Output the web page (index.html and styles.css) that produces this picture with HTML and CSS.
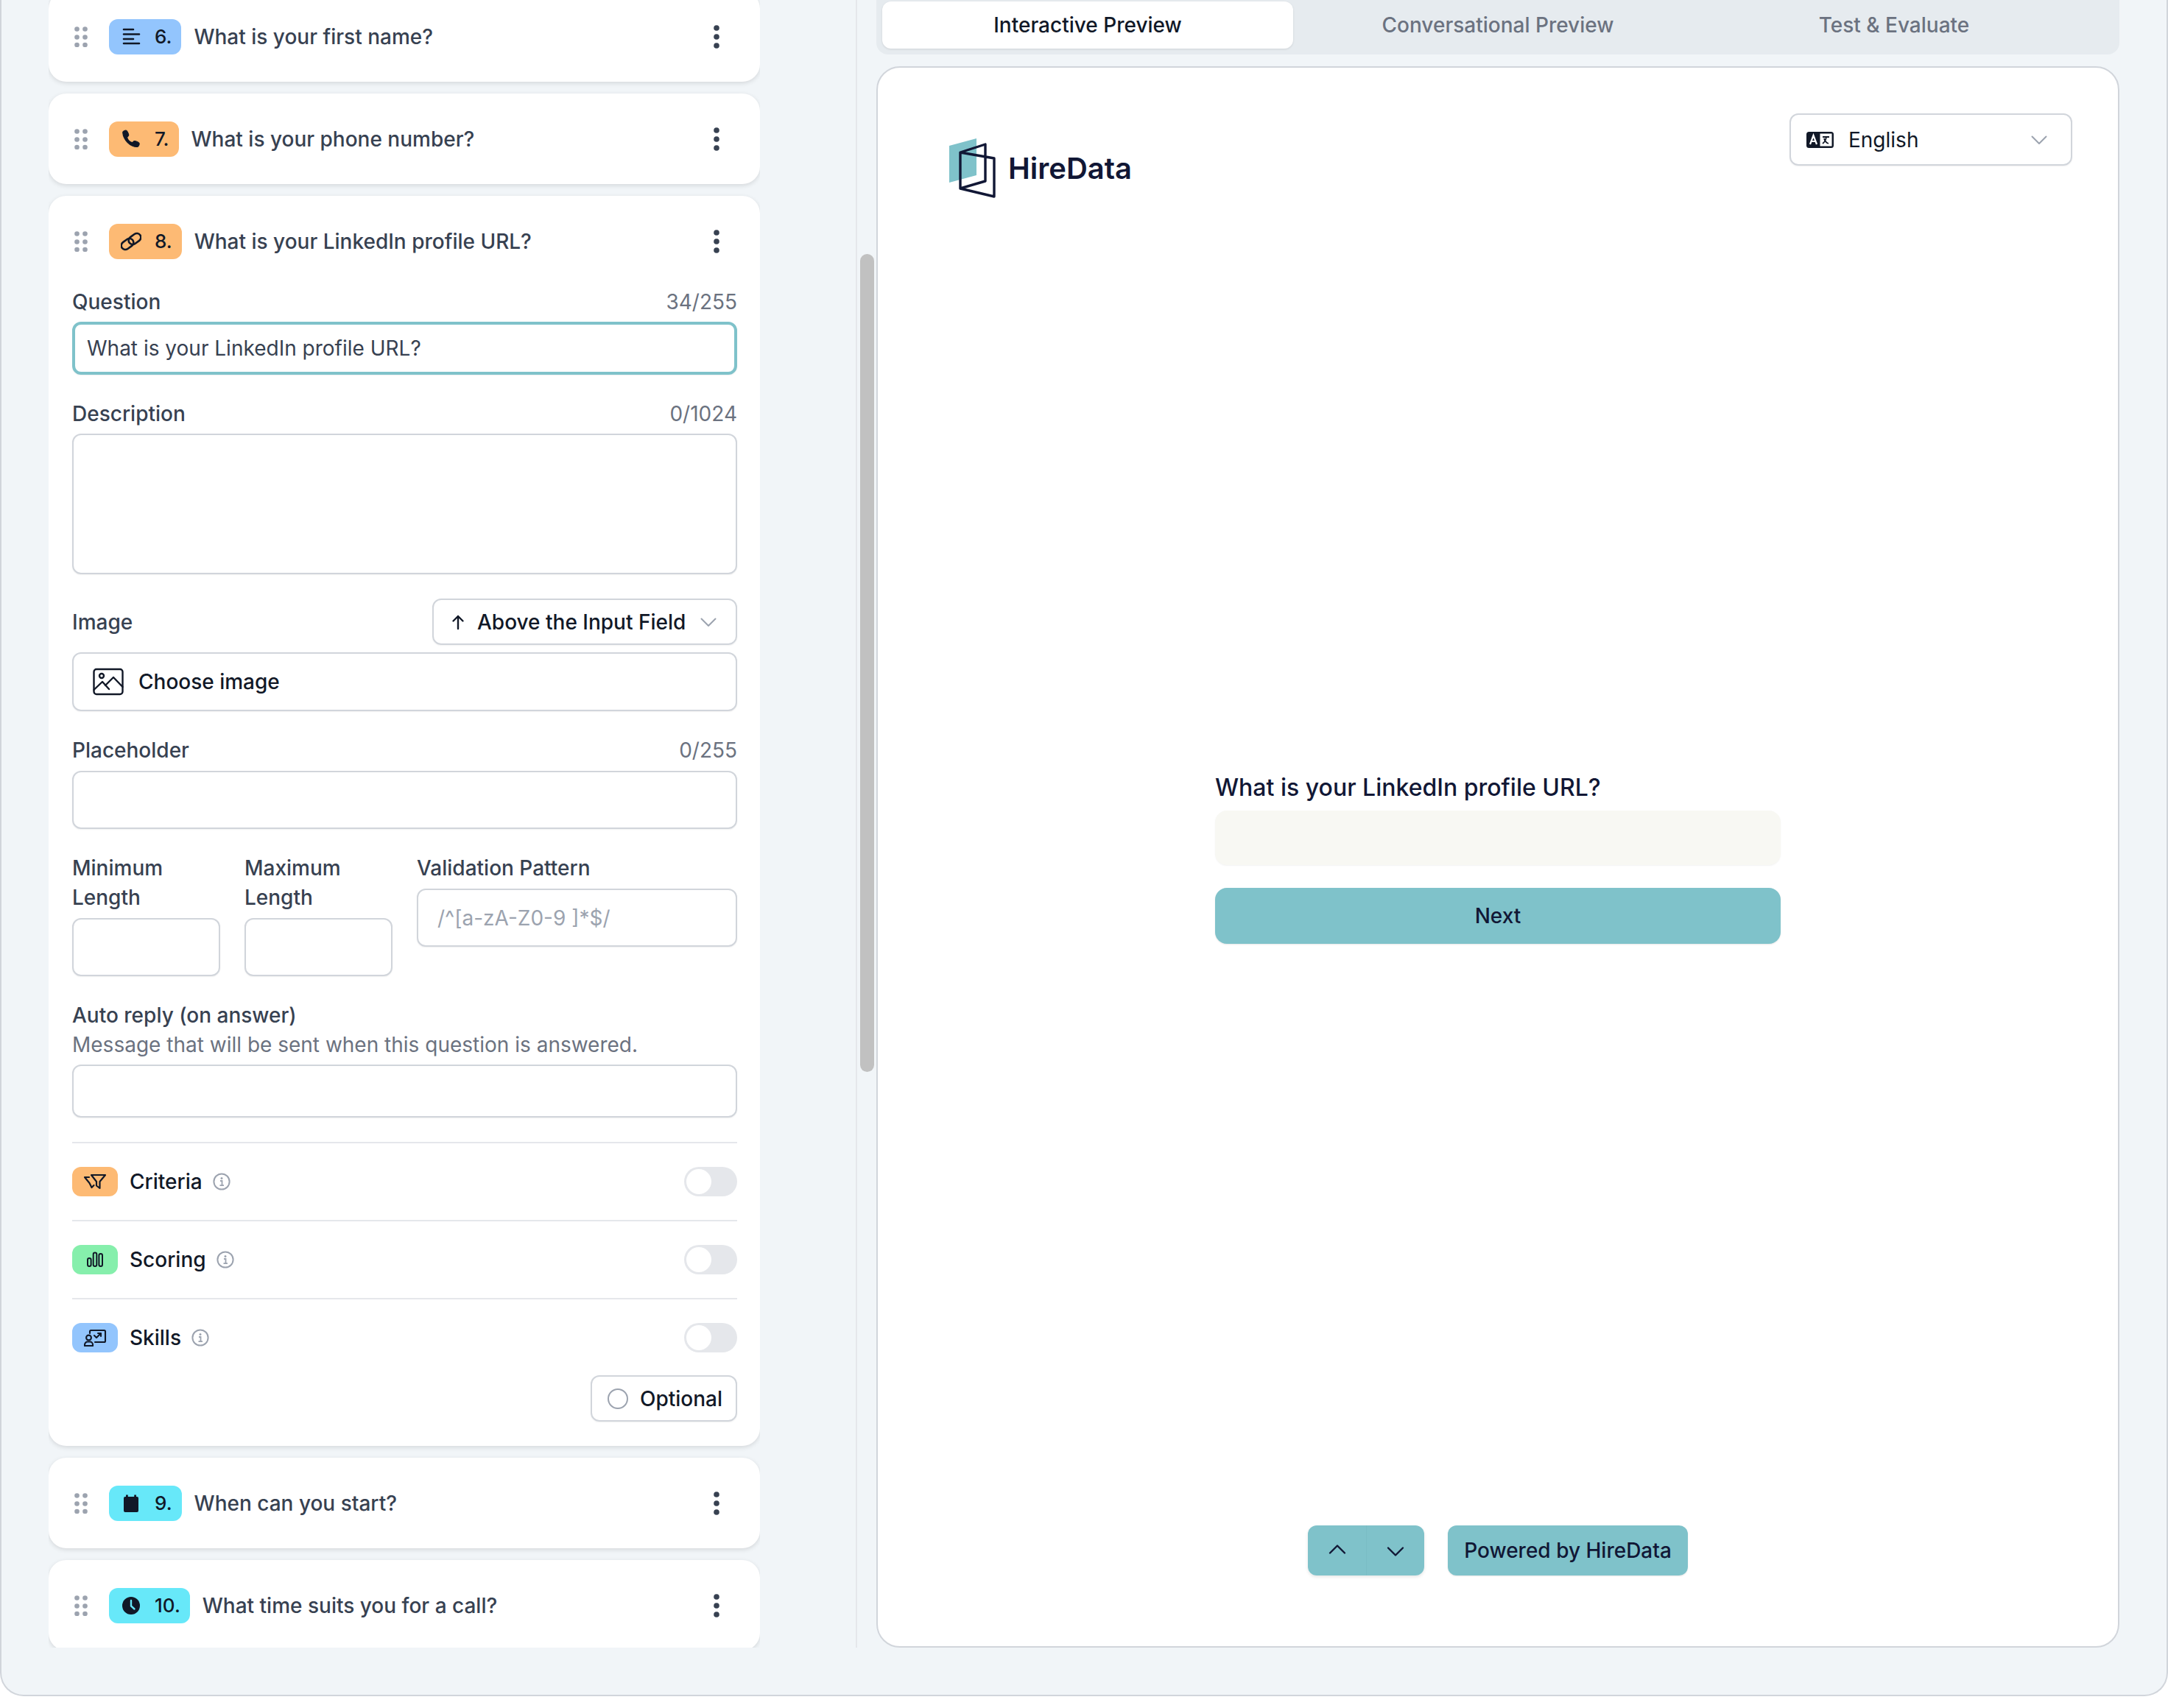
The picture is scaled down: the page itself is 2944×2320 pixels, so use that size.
FILE: index.html
```html
<!DOCTYPE html>
<html lang="en">
<head>
    <meta charset="UTF-8">
    <title>HireData form builder</title>
    <link rel="stylesheet" href="styles.css">
</head>
<body>
    <div class="app">
        <div class="builder">
            <div class="question-list">
                <div class="card first">
                    <div class="card-head">
                        <svg class="drag" viewBox="0 0 24 28"><g fill="#9ca3af"><circle cx="6.5" cy="3.5" r="3.3"/><circle cx="17.5" cy="3.5" r="3.3"/><circle cx="6.5" cy="14.5" r="3.3"/><circle cx="17.5" cy="14.5" r="3.3"/><circle cx="6.5" cy="25" r="3.3"/><circle cx="17.5" cy="25" r="3.3"/></g></svg>
                        <div class="pill blue">
                            <svg class="pill-icon" viewBox="0 0 28 28"><path d="M4 4h13M4 10.5h21M4 17h13M4 23h21" fill="none" stroke="#111827" stroke-width="2.6" stroke-linecap="round"/></svg>
                            <span>6.</span>
                        </div>
                        <span class="card-title">What is your first name?</span>
                        <svg class="kebab" viewBox="0 0 8 32"><g fill="#374151"><circle cx="4" cy="4" r="3.8"/><circle cx="4" cy="16" r="3.8"/><circle cx="4" cy="28" r="3.8"/></g></svg>
                    </div>
                </div>

                <div class="card">
                    <div class="card-head">
                        <svg class="drag" viewBox="0 0 24 28"><g fill="#9ca3af"><circle cx="6.5" cy="3.5" r="3.3"/><circle cx="17.5" cy="3.5" r="3.3"/><circle cx="6.5" cy="14.5" r="3.3"/><circle cx="17.5" cy="14.5" r="3.3"/><circle cx="6.5" cy="25" r="3.3"/><circle cx="17.5" cy="25" r="3.3"/></g></svg>
                        <div class="pill orange">
                            <svg class="pill-icon" viewBox="1 1 26 26"><path d="M3.5 5.500c0-1.400 3-3 4.500-2.500 1.200.4 3 4.400 3 6 0 1.200-2 2-2 3 .8 2.700 3.600 5.500 6.300 6.300 1 0 1.800-2 3-2 1.600 0 5.600 1.800 6 3 .5 1.500-1.100 4.500-2.500 4.500C13 24 4 15 3.500 5.500z" fill="#111827" stroke="#111827" stroke-width="1" stroke-linejoin="round"/></svg>
                            <span>7.</span>
                        </div>
                        <span class="card-title">What is your phone number?</span>
                        <svg class="kebab" viewBox="0 0 8 32"><g fill="#374151"><circle cx="4" cy="4" r="3.8"/><circle cx="4" cy="16" r="3.8"/><circle cx="4" cy="28" r="3.8"/></g></svg>
                    </div>
                </div>

                <div class="card open">
                    <div class="card-head">
                        <svg class="drag" viewBox="0 0 24 28"><g fill="#9ca3af"><circle cx="6.5" cy="3.5" r="3.3"/><circle cx="17.5" cy="3.5" r="3.3"/><circle cx="6.5" cy="14.5" r="3.3"/><circle cx="17.5" cy="14.5" r="3.3"/><circle cx="6.5" cy="25" r="3.3"/><circle cx="17.5" cy="25" r="3.3"/></g></svg>
                        <div class="pill orange">
                            <svg class="pill-icon" viewBox="0 0 28 28"><g fill="none" stroke="#111827" stroke-width="2.6"><rect x="0" y="12" width="18" height="11" rx="5.5" transform="rotate(-36 9 17.5)"/><rect x="10" y="5" width="18" height="11" rx="5.5" transform="rotate(-36 19 10.5)"/></g></svg>
                            <span>8.</span>
                        </div>
                        <span class="card-title">What is your LinkedIn profile URL?</span>
                        <svg class="kebab" viewBox="0 0 8 32"><g fill="#374151"><circle cx="4" cy="4" r="3.8"/><circle cx="4" cy="16" r="3.8"/><circle cx="4" cy="28" r="3.8"/></g></svg>
                    </div>

                    <div class="field first-field">
                        <div class="label-row"><span>Question</span><span class="count">34/255</span></div>
                        <div class="input focused">What is your LinkedIn profile URL?</div>
                    </div>

                    <div class="field">
                        <div class="label-row"><span>Description</span><span class="count">0/1024</span></div>
                        <div class="input textarea"></div>
                    </div>

                    <div class="field">
                        <div class="image-row">
                            <span>Image</span>
                            <div class="select">
                                <svg class="select-arrow" viewBox="0 0 24 24"><path d="M12 21V4M5.5 10.500 12 4l6.500 6.500" fill="none" stroke="#111827" stroke-width="2.4" stroke-linecap="round" stroke-linejoin="round"/></svg>
                                <span>Above the Input Field</span>
                                <svg class="chevron" viewBox="0 0 24 24"><path d="m2.500 7.500 9.500 9.500 9.500-9.500" fill="none" stroke="#9ca3af" stroke-width="2" stroke-linecap="round" stroke-linejoin="round"/></svg>
                            </div>
                        </div>
                        <div class="input chooser">
                            <svg class="image-icon" viewBox="0 0 42 38"><g fill="none" stroke="#111827" stroke-width="2.4" stroke-linecap="round" stroke-linejoin="round"><rect x="1.5" y="2" width="39" height="34" rx="3.5"/><circle cx="12" cy="11" r="3"/><path d="M1.500 30 13 19l9 10M17 24l11-11 12.500 13"/></g></svg>
                            <span>Choose image</span>
                        </div>
                    </div>

                    <div class="field">
                        <div class="label-row wide"><span>Placeholder</span><span class="count">0/255</span></div>
                        <div class="input tall"></div>
                    </div>

                    <div class="length-grid field">
                        <div>
                            <div class="grid-label">Minimum<br>Length</div>
                            <div class="input tall"></div>
                        </div>
                        <div>
                            <div class="grid-label">Maximum<br>Length</div>
                            <div class="input tall"></div>
                        </div>
                        <div>
                            <div class="grid-label">Validation Pattern</div>
                            <div class="input tall pattern">/^[a-zA-Z0-9 ]*$/</div>
                        </div>
                    </div>

                    <div class="field">
                        <div class="grid-label auto-label">Auto reply (on answer)</div>
                        <div class="hint">Message that will be sent when this question is answered.</div>
                        <div class="input"></div>
                    </div>

                    <div class="option-row">
                        <div class="option-badge orange">
                            <svg viewBox="0 0 32 24"><g fill="none" stroke="#111827" stroke-width="2.2" stroke-linejoin="round" stroke-linecap="round"><path d="M11 3h19l-7.500 9v9l-4.500-3.500V12zM8 6H2l6.500 8 3 6 3-3"/></g></svg>
                        </div>
                        <span class="option-name">Criteria</span>
                        <svg class="info" viewBox="0 0 24 24"><circle cx="12" cy="12" r="10.6" fill="none" stroke="#9ca3af" stroke-width="2"/><path d="M10 11h2.500v6M9.500 17.200H15" fill="none" stroke="#9ca3af" stroke-width="1.8"/><circle cx="12" cy="7.5" r="1.5" fill="#9ca3af"/></svg>
                        <div class="toggle"></div>
                    </div>
                    <div class="option-row">
                        <div class="option-badge green">
                            <svg viewBox="0 0 32 24"><g fill="none" stroke="#111827" stroke-width="2"><rect x="6" y="10" width="4.6" height="11" rx="2.3"/><rect x="13.7" y="2.5" width="4.6" height="18.5" rx="2.3"/><rect x="21.4" y="4" width="4.6" height="17" rx="2.3"/></g></svg>
                        </div>
                        <span class="option-name">Scoring</span>
                        <svg class="info" viewBox="0 0 24 24"><circle cx="12" cy="12" r="10.6" fill="none" stroke="#9ca3af" stroke-width="2"/><path d="M10 11h2.500v6M9.500 17.200H15" fill="none" stroke="#9ca3af" stroke-width="1.8"/><circle cx="12" cy="7.5" r="1.5" fill="#9ca3af"/></svg>
                        <div class="toggle"></div>
                    </div>
                    <div class="option-row">
                        <div class="option-badge blue">
                            <svg viewBox="0 0 32 24"><g fill="none" stroke="#111827" stroke-width="2.1" stroke-linecap="round" stroke-linejoin="round"><path d="M9 6V3.500A1.500 1.500 0 0 1 10.500 2h18A1.500 1.500 0 0 1 30 3.500v13a1.500 1.500 0 0 1-1.500 1.500H16"/><circle cx="7.5" cy="12" r="3.4"/><path d="M2 23v-1.500a4 4 0 0 1 4-4h3a4 4 0 0 1 4 4V23zM15 9l3 3 6-6m0 0h-4m4 0v4"/></g></svg>
                        </div>
                        <span class="option-name">Skills</span>
                        <svg class="info" viewBox="0 0 24 24"><circle cx="12" cy="12" r="10.6" fill="none" stroke="#9ca3af" stroke-width="2"/><path d="M10 11h2.500v6M9.500 17.200H15" fill="none" stroke="#9ca3af" stroke-width="1.8"/><circle cx="12" cy="7.5" r="1.5" fill="#9ca3af"/></svg>
                        <div class="toggle"></div>
                    </div>

                    <div class="optional-row">
                        <div class="optional">
                            <span class="radio"></span>
                            <span>Optional</span>
                        </div>
                    </div>
                </div>

                <div class="card">
                    <div class="card-head">
                        <svg class="drag" viewBox="0 0 24 28"><g fill="#9ca3af"><circle cx="6.5" cy="3.5" r="3.3"/><circle cx="17.5" cy="3.5" r="3.3"/><circle cx="6.5" cy="14.5" r="3.3"/><circle cx="17.5" cy="14.5" r="3.3"/><circle cx="6.5" cy="25" r="3.3"/><circle cx="17.5" cy="25" r="3.3"/></g></svg>
                        <div class="pill cyan">
                            <svg class="pill-icon" viewBox="0 0 28 28"><path d="M7 2.500h2.800V5h8.400V2.500H21V5h1a2 2 0 0 1 2 2v17a2 2 0 0 1-2 2H6a2 2 0 0 1-2-2V7a2 2 0 0 1 2-2h1z" fill="#111827"/></svg>
                            <span>9.</span>
                        </div>
                        <span class="card-title">When can you start?</span>
                        <svg class="kebab" viewBox="0 0 8 32"><g fill="#374151"><circle cx="4" cy="4" r="3.8"/><circle cx="4" cy="16" r="3.8"/><circle cx="4" cy="28" r="3.8"/></g></svg>
                    </div>
                </div>

                <div class="card">
                    <div class="card-head">
                        <svg class="drag" viewBox="0 0 24 28"><g fill="#9ca3af"><circle cx="6.5" cy="3.5" r="3.3"/><circle cx="17.5" cy="3.5" r="3.3"/><circle cx="6.5" cy="14.5" r="3.3"/><circle cx="17.5" cy="14.5" r="3.3"/><circle cx="6.5" cy="25" r="3.3"/><circle cx="17.5" cy="25" r="3.3"/></g></svg>
                        <div class="pill cyan">
                            <svg class="pill-icon" viewBox="0 0 28 28"><circle cx="14" cy="14" r="12" fill="#111827"/><path d="M14 7v7.500l4.500 4" fill="none" stroke="#67e8f9" stroke-width="2.4" stroke-linecap="round"/></svg>
                            <span>10.</span>
                        </div>
                        <span class="card-title">What time suits you for a call?</span>
                        <svg class="kebab" viewBox="0 0 8 32"><g fill="#374151"><circle cx="4" cy="4" r="3.8"/><circle cx="4" cy="16" r="3.8"/><circle cx="4" cy="28" r="3.8"/></g></svg>
                    </div>
                </div>
            </div>
            <div class="scroll-thumb"></div>
        </div>

        <div class="preview">
            <div class="tabs">
                <div class="tab active">Interactive Preview</div>
                <div class="tab">Conversational Preview</div>
                <div class="tab">Test &amp; Evaluate</div>
            </div>

            <div class="stage">
                <div class="stage-head">
                    <div class="logo">
                        <svg class="logo-mark" viewBox="0 0 66 82">
                            <path d="M1 11 38 1v50L1 61z" fill="#7fc2ca"/>
                            <g fill="none" stroke="#111735" stroke-width="3.4" stroke-linejoin="round">
                                <path d="M16 20 50 9v50L16 69zM16 20l46 8v52l-46-11"/>
                            </g>
                        </svg>
                        <span class="logo-text">HireData</span>
                    </div>
                    <div class="language">
                        <svg class="language-icon" viewBox="0 0 37 24">
                            <rect x="0" y="1" width="37" height="22" rx="3.5" fill="#111827"/>
                            <rect x="18.5" y="3.5" width="16" height="17" fill="#fff"/>
                            <path d="M5 18 9.500 6 14 18M6.500 14h6" fill="none" stroke="#fff" stroke-width="2.2"/>
                            <path d="M22 8h9M27 8c-.5 4-2.500 7-5 9M24 10c.8 3 3 6 6 7" fill="none" stroke="#111827" stroke-width="1.8"/>
                        </svg>
                        <span>English</span>
                        <svg class="chevron" viewBox="0 0 24 24"><path d="m2.500 7.500 9.500 9.500 9.500-9.500" fill="none" stroke="#9ca3af" stroke-width="2" stroke-linecap="round" stroke-linejoin="round"/></svg>
                    </div>
                </div>

                <div class="stage-body">
                    <div class="preview-form">
                        <div class="preview-question">What is your LinkedIn profile URL?</div>
                        <div class="preview-input"></div>
                        <div class="next-button">Next</div>
                    </div>
                </div>

                <div class="stage-foot">
                    <div class="pager">
                        <div class="pager-btn">
                            <svg viewBox="0 0 28 28"><path d="m4 17.500 10-10 10 10" fill="none" stroke="#111735" stroke-width="2.4" stroke-linecap="round" stroke-linejoin="round"/></svg>
                        </div>
                        <div class="pager-btn down">
                            <svg viewBox="0 0 28 28"><path d="m4 10.500 10 10 10-10" fill="none" stroke="#111735" stroke-width="2.4" stroke-linecap="round" stroke-linejoin="round"/></svg>
                        </div>
                    </div>
                    <div class="powered">Powered by HireData</div>
                </div>
            </div>
        </div>
    </div>
</body>
</html>
```

FILE: styles.css
```css
* {
    margin: 0;
    padding: 0;
    box-sizing: border-box;
}

html,
body {
    width: 2944px;
    height: 2320px;
    overflow: hidden;
    background: #fff;
    font-family: 'Inter', 'Liberation Sans', sans-serif;
    font-size: 28px;
    line-height: 40px;
    color: #111827;
}

.app {
    display: flex;
    height: 2304px;
    padding-bottom: 64px;
    background: #f1f5f8;
    border: 2px solid #d1d5db;
    border-top: none;
    border-radius: 0 0 32px 32px;
}

/* left column */
.builder {
    position: relative;
    width: 1162px;
    flex-shrink: 0;
    height: 2238px;
    padding-left: 64px;
    border-right: 2px solid #e5e7eb;
}

.question-list {
    width: 966px;
    height: 2238px;
    overflow: hidden;
    display: flex;
    flex-direction: column;
    gap: 16px;
}

.scroll-thumb {
    position: absolute;
    left: 1166px;
    top: 345px;
    width: 19px;
    height: 1111px;
    background: #c1c1c1;
    border-radius: 10px;
}

.card {
    flex-shrink: 0;
    background: #fff;
    border-radius: 24px;
    padding: 38px 31px 37px 32px;
    box-shadow: 0 2px 6px rgba(0, 0, 0, 0.12);
}

.card.first {
    margin-top: -12px;
}

.card.open {
    padding-bottom: 33px;
}

.card-head {
    display: flex;
    align-items: center;
    height: 48px;
}

.drag {
    width: 24px;
    height: 28px;
    margin: 0 26px 0 0;
    flex-shrink: 0;
}

.pill {
    display: flex;
    align-items: center;
    gap: 18px;
    height: 48px;
    padding: 0 13px 0 16px;
    border-radius: 12px;
    font-size: 26px;
    font-weight: 500;
}

.pill-icon {
    width: 28px;
    height: 28px;
    flex-shrink: 0;
}

.blue { background: #93c5fd; }
.orange { background: #fdba74; }
.green { background: #86efac; }
.cyan { background: #67e8f9; }

.card-title {
    margin-left: 17px;
    font-weight: 500;
    color: #374151;
}

.kebab {
    width: 8px;
    height: 32px;
    margin-left: auto;
    margin-right: 24px;
}

/* form fields */
.field {
    margin-top: 33px;
}

.first-field {
    margin-top: 38px;
}

.label-row {
    display: flex;
    justify-content: space-between;
    margin-bottom: 7px;
    font-weight: 500;
    color: #374151;
}

.label-row.wide {
    margin-bottom: 8px;
}

.grid-label {
    margin-bottom: 8px;
    font-weight: 500;
    color: #374151;
}

.count {
    font-weight: 400;
    color: #6b7280;
}

.input {
    height: 72px;
    display: flex;
    align-items: center;
    padding: 0 18px;
    border: 2px solid #d1d5db;
    border-radius: 12px;
    background: #fff;
    box-shadow: 0 1px 2px rgba(0, 0, 0, 0.06);
    color: #374151;
}

.input.focused {
    border: 4px solid #7fc2ca;
    padding: 0 16px;
}

.input.textarea {
    height: 191px;
}

.input.tall {
    height: 79px;
}

.input.pattern {
    padding: 0 26px;
    color: #9ca3af;
}

.image-row {
    display: flex;
    align-items: center;
    justify-content: space-between;
    font-weight: 500;
    color: #374151;
}

.select {
    display: flex;
    align-items: center;
    width: 414px;
    height: 63px;
    padding: 0 25px 0 21px;
    border: 2px solid #d1d5db;
    border-radius: 12px;
    box-shadow: 0 1px 2px rgba(0, 0, 0, 0.06);
    color: #111827;
    font-weight: 500;
}

.select-arrow {
    width: 24px;
    height: 24px;
    margin-right: 14px;
    flex-shrink: 0;
}

.chevron {
    width: 24px;
    height: 24px;
    margin-left: auto;
    flex-shrink: 0;
}

.input.chooser {
    height: 80px;
    margin-top: 10px;
    padding: 0 26px;
    color: #111827;
    font-weight: 500;
}

.image-icon {
    width: 42px;
    height: 38px;
    margin-right: 20px;
}

.length-grid {
    display: grid;
    grid-template-columns: 201px 201px 1fr;
    column-gap: 33px;
    align-items: start;
}

.auto-label {
    margin-bottom: 0;
}

.hint {
    margin-bottom: 7px;
    color: #6b7280;
}

.option-row {
    display: flex;
    align-items: center;
    height: 106px;
    border-top: 2px solid #e5e7eb;
}

.field + .option-row {
    margin-top: 33px;
}

.option-badge {
    display: flex;
    align-items: center;
    justify-content: center;
    width: 62px;
    height: 40px;
    border-radius: 12px;
    flex-shrink: 0;
}

.option-badge svg {
    width: 32px;
    height: 24px;
}

.option-name {
    margin-left: 16px;
    font-weight: 500;
    color: #111827;
}

.info {
    width: 24px;
    height: 24px;
    margin-left: 14px;
}

.toggle {
    position: relative;
    width: 72px;
    height: 40px;
    margin-left: auto;
    background: #e5e7eb;
    border-radius: 20px;
}

.toggle::before {
    content: "";
    position: absolute;
    left: 3px;
    top: 3px;
    width: 34px;
    height: 34px;
    background: #fff;
    border-radius: 50%;
}

.optional-row {
    display: flex;
    justify-content: flex-end;
    margin-top: -1px;
}

.optional {
    display: flex;
    align-items: center;
    height: 63px;
    padding: 0 18px 0 21px;
    border: 2px solid #d1d5db;
    border-radius: 12px;
    box-shadow: 0 1px 2px rgba(0, 0, 0, 0.06);
    font-weight: 500;
    color: #111827;
}

.radio {
    width: 28px;
    height: 28px;
    margin-right: 16px;
    border: 2px solid #9ca3af;
    border-radius: 50%;
}

/* right column */
.preview {
    flex: 1;
    display: flex;
    flex-direction: column;
    height: 2238px;
    padding: 0 64px 0 26px;
    gap: 16px;
}

.tabs {
    display: grid;
    grid-template-columns: 558px 556px 520px;
    height: 74px;
    padding: 2px 0 8px 8px;
    background: #e6ebef;
    border-radius: 0 0 16px 16px;
    flex-shrink: 0;
}

.tab {
    display: flex;
    align-items: center;
    justify-content: center;
    font-weight: 500;
    color: #6b7280;
}

.tab.active {
    background: #fff;
    color: #111827;
    border-radius: 12px;
    box-shadow: 0 1px 3px rgba(0, 0, 0, 0.1);
}

.stage {
    flex: 1;
    display: flex;
    flex-direction: column;
    background: #fff;
    border: 2px solid #d1d5db;
    border-radius: 32px;
}

.stage-head {
    display: flex;
    align-items: flex-start;
    justify-content: space-between;
    padding: 62px 62px 0 96px;
}

.logo {
    display: flex;
    align-items: flex-end;
    margin-top: 33px;
}

.logo-mark {
    width: 66px;
    height: 82px;
    margin-right: 15px;
}

.logo-text {
    margin-bottom: 16px;
    font-size: 40px;
    line-height: 48px;
    font-weight: 600;
    color: #111735;
}

.language {
    display: flex;
    align-items: center;
    width: 384px;
    height: 71px;
    padding: 0 31px 0 21px;
    border: 2px solid #d1d5db;
    border-radius: 12px;
    box-shadow: 0 1px 2px rgba(0, 0, 0, 0.06);
}

.language-icon {
    width: 37px;
    height: 24px;
    margin-right: 20px;
}

.stage-body {
    flex: 1;
    display: flex;
    justify-content: center;
}

.preview-form {
    width: 768px;
    margin-top: 779px;
}

.preview-question {
    font-size: 32px;
    line-height: 44px;
    font-weight: 500;
    color: #111735;
}

.preview-input {
    height: 74px;
    margin-top: 9px;
    background: #f8f8f3;
    border-radius: 16px;
    box-shadow: 0 1px 2px rgba(0, 0, 0, 0.05);
}

.next-button {
    display: flex;
    align-items: center;
    justify-content: center;
    height: 76px;
    margin-top: 31px;
    background: #7fc2ca;
    border-radius: 16px;
    box-shadow: 0 1px 2px rgba(0, 0, 0, 0.1);
    font-weight: 500;
    color: #111735;
}

.stage-foot {
    display: flex;
    justify-content: center;
    gap: 32px;
    padding-bottom: 96px;
}

.pager {
    display: flex;
    height: 68px;
    border-radius: 12px;
    overflow: hidden;
    box-shadow: 0 2px 4px rgba(0, 0, 0, 0.1);
}

.pager-btn {
    display: flex;
    align-items: center;
    justify-content: center;
    width: 79px;
    height: 68px;
    background: #7fc2ca;
}

.pager-btn.down {
    border-left: 1px solid #7abcc4;
}

.pager-btn svg {
    width: 28px;
    height: 28px;
}

.powered {
    display: flex;
    align-items: center;
    height: 68px;
    padding: 0 22px;
    background: #7fc2ca;
    border-radius: 12px;
    box-shadow: 0 1px 2px rgba(0, 0, 0, 0.1);
    color: #111735;
    font-weight: 500;
}
```
